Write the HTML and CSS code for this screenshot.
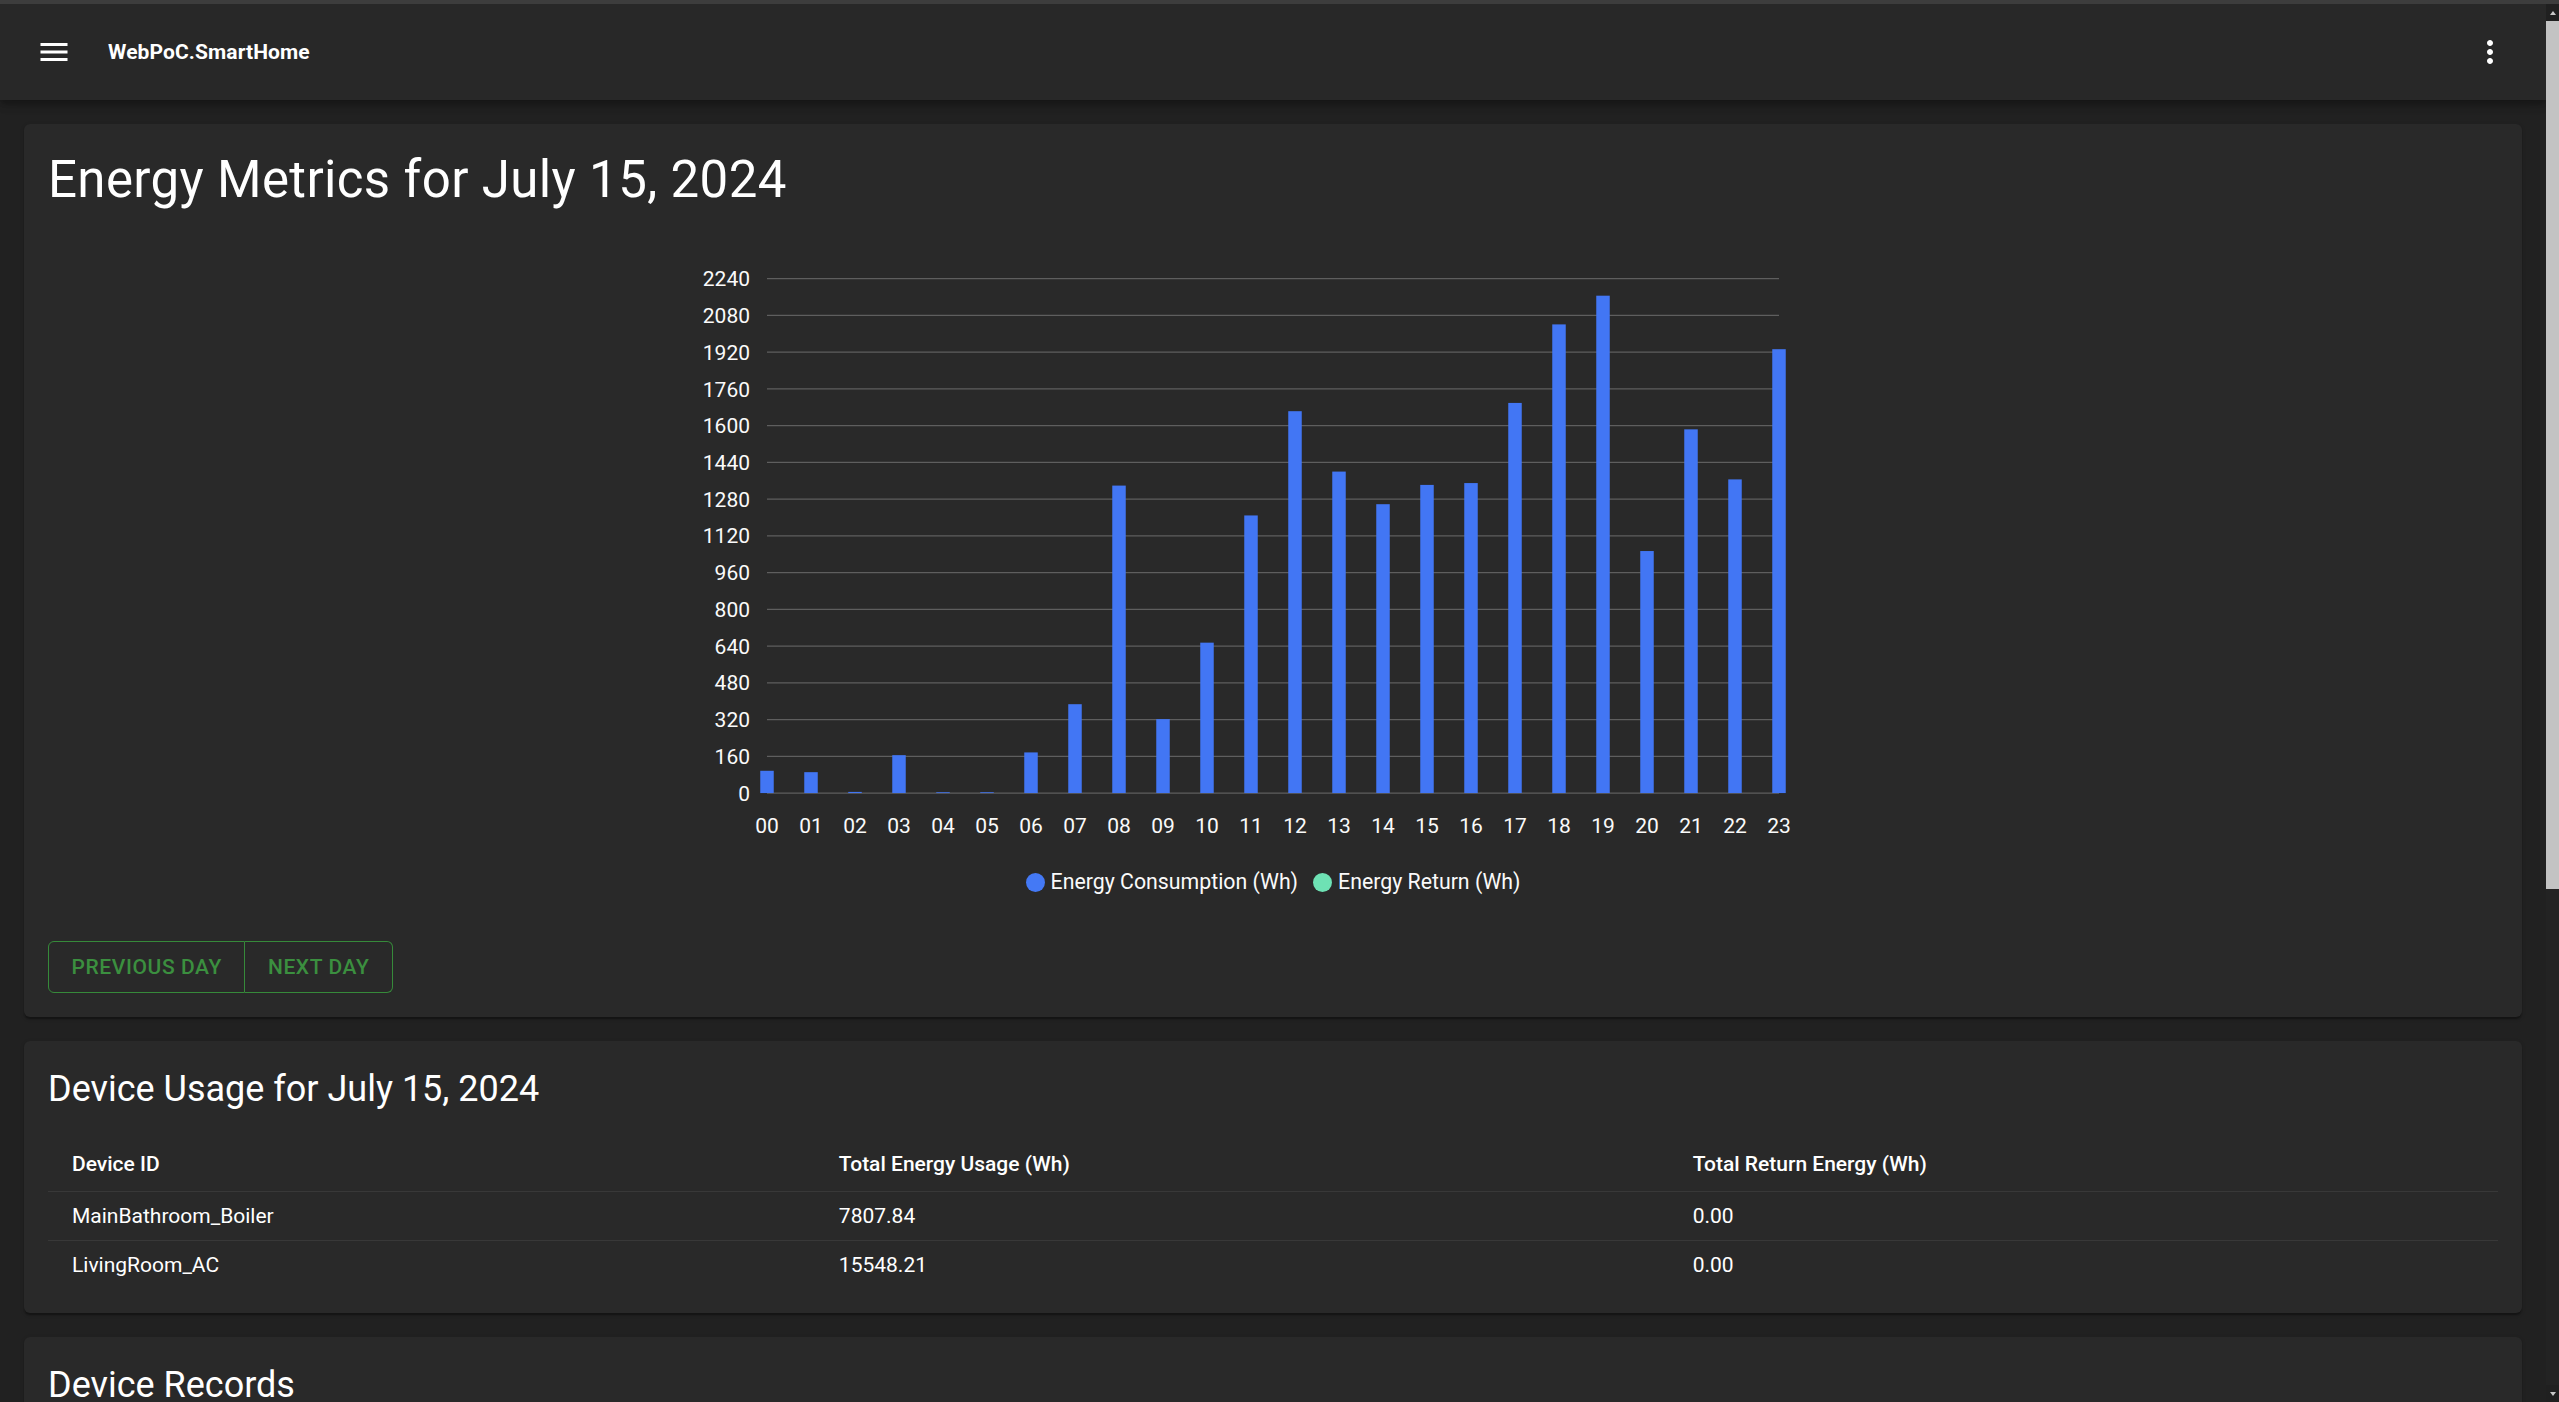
FILE: index.html
```html
<!DOCTYPE html>
<html lang="en">
<head>
<meta charset="utf-8">
<title>WebPoC.SmartHome</title>
<link rel="stylesheet" href="styles.css">
</head>
<body>
<div class="window">
  <div class="page">
    <header class="appbar">
      <div class="toolbar">
        <svg class="icon" viewBox="0 0 24 24" aria-hidden="true"><path d="M3 18h18v-2H3v2zm0-5h18v-2H3v2zm0-7v2h18V6H3z"/></svg>
        <div class="brand">WebPoC.SmartHome</div>
        <div class="spacer"></div>
        <svg class="icon" viewBox="0 0 24 24" aria-hidden="true"><path d="M12 8c1.1 0 2-.9 2-2s-.9-2-2-2-2 .9-2 2 .9 2 2 2zm0 2c-1.1 0-2 .9-2 2s.9 2 2 2 2-.9 2-2-.9-2-2-2zm0 6c-1.1 0-2 .9-2 2s.9 2 2 2 2-.9 2-2-.9-2-2-2z"/></svg>
      </div>
    </header>
    <main class="content">
      <section class="card">
        <h1 class="h4">Energy Metrics for July 15, 2024</h1>
        <div class="chart-wrap">
          <svg class="chart" id="chart" width="1200" height="655" viewBox="0 0 1200 655"></svg>
        </div>
        <div class="legend">
          <div class="legend-item"><span class="dot dot-blue"></span><span>Energy Consumption (Wh)</span></div>
          <div class="legend-item"><span class="dot dot-green"></span><span>Energy Return (Wh)</span></div>
        </div>
        <div class="btn-group">
          <button class="btn">Previous Day</button>
          <button class="btn">Next Day</button>
        </div>
      </section>
      <section class="card">
        <h2 class="h5">Device Usage for July 15, 2024</h2>
        <table class="table">
          <thead>
            <tr><th class="col1">Device ID</th><th class="col2">Total Energy Usage (Wh)</th><th>Total Return Energy (Wh)</th></tr>
          </thead>
          <tbody>
            <tr><td>MainBathroom_Boiler</td><td>7807.84</td><td>0.00</td></tr>
            <tr><td>LivingRoom_AC</td><td>15548.21</td><td>0.00</td></tr>
          </tbody>
        </table>
      </section>
      <section class="card card-records">
        <h2 class="h5">Device Records</h2>
      </section>
    </main>
  </div>
  <div class="scrollbar" aria-hidden="true">
    <div class="sb-btn"><span class="arrow-up"></span></div>
    <div class="sb-thumb"></div>
    <div class="sb-track"></div>
    <div class="sb-btn"><span class="arrow-down"></span></div>
  </div>
</div>
<script>
(function(){
  var svg = document.getElementById('chart');
  var NS = 'http://www.w3.org/2000/svg';
  var values = [97,91,5,165,3,3,177,387,1339,322,655,1209,1663,1400,1258,1342,1350,1699,2041,2166,1054,1584,1366,1933];
  var top = 66.7, step = 36.74, zero = top + 14*step, x0 = 94, dx = 44, scale = (14*step)/2240;
  function el(name, attrs, text){
    var e = document.createElementNS(NS, name);
    for (var k in attrs) e.setAttribute(k, attrs[k]);
    if (text !== undefined) e.textContent = text;
    svg.appendChild(e);
    return e;
  }
  for (var i = 0; i <= 14; i++) {
    var y = top + i*step;
    el('line', {x1: x0, x2: x0 + 23*dx, y1: y, y2: y, 'class': 'grid'});
    el('text', {x: 77, y: y + 7.6, 'class': 'ytick'}, String(2240 - 160*i));
  }
  for (var j = 0; j < 24; j++) {
    var cx = x0 + j*dx, h = Math.max(values[j]*scale, 0.8);
    el('rect', {x: cx - 6.75, y: zero - h, width: 13.5, height: h, 'class': 'bar'});
    el('text', {x: cx, y: 621.3, 'class': 'xtick'}, (j < 10 ? '0' : '') + j);
  }
})();
</script>
</body>
</html>
```
FILE: styles.css
```css
html {
  background: #212121;
}
body {
  margin: 0;
  height: 100vh;
  box-sizing: border-box;
  overflow: hidden;
  border-top: 4px solid #3d3d3d;
  background: #212121;
  color: #fff;
  font-family: Roboto, "Noto Sans", "Liberation Sans", sans-serif;
  display: flex;
  flex-direction: column;
}
.window {
  flex: 1;
  min-height: 0;
  display: flex;
}
.page {
  flex: 1;
  min-width: 0;
  overflow: hidden;
}

/* scrollbar rail drawn as in the screenshot */
.scrollbar {
  width: 13px;
  flex: none;
  display: flex;
  flex-direction: column;
  background: #232323;
}
.sb-btn {
  height: 17px;
  flex: none;
  display: flex;
  align-items: center;
  justify-content: center;
  background: #202020;
}
.sb-thumb {
  height: 868px;
  flex: none;
  background: #c3c3c3;
}
.sb-track {
  flex: 1;
}
.arrow-up {
  width: 0;
  height: 0;
  border-left: 3.5px solid transparent;
  border-right: 3.5px solid transparent;
  border-bottom: 4px solid #c8c8c8;
}
.arrow-down {
  width: 0;
  height: 0;
  border-left: 3.5px solid transparent;
  border-right: 3.5px solid transparent;
  border-top: 4px solid #c8c8c8;
}

.appbar {
  background: #282828;
  box-shadow: 0 3px 6px -1.5px rgba(0,0,0,.2), 0 6px 7.5px 0 rgba(0,0,0,.14), 0 1.5px 15px 0 rgba(0,0,0,.12);
  position: relative;
  z-index: 2;
}
.toolbar {
  height: 96px;
  display: flex;
  align-items: center;
  padding: 0 38px 0 36px;
}
.icon {
  width: 36px;
  height: 36px;
  fill: #fff;
  flex: none;
}
.brand {
  margin-left: 36px;
  font-size: 21px;
  font-weight: 700;
  letter-spacing: 0.1px;
}
.spacer {
  flex: 1;
}

.content {
  padding: 24px;
  display: flex;
  flex-direction: column;
  gap: 24px;
}
.card {
  background: #292929;
  border-radius: 6px;
  padding: 24px;
  box-shadow: 0 3px 1.5px -1.5px rgba(0,0,0,.2), 0 1.5px 1.5px 0 rgba(0,0,0,.14), 0 1.5px 4.5px 0 rgba(0,0,0,.12);
}
.card-records {
  min-height: 849px;
  box-sizing: border-box;
}
.h4 {
  margin: 0;
  font-size: 51px;
  font-weight: 400;
  line-height: 63px;
  letter-spacing: 0.37px;
}
.h5 {
  margin: 0;
  font-size: 36px;
  font-weight: 400;
  line-height: 48px;
}

.chart-wrap {
  display: flex;
  justify-content: center;
  padding-top: 1px;
}
.chart {
  display: block;
}
.chart .grid {
  stroke: #5e5e5e;
  stroke-width: 1.3;
}
.chart .bar {
  fill: #4276f4;
}
.chart text {
  font-family: Roboto, "Noto Sans", sans-serif;
  font-size: 21px;
  fill: #fafafa;
}
.chart .ytick {
  text-anchor: end;
}
.chart .xtick {
  text-anchor: middle;
}

.legend {
  display: flex;
  justify-content: center;
  gap: 15px;
  height: 30px;
  align-items: center;
  font-size: 21.3px;
  line-height: 30px;
  color: #fafafa;
}
.legend-item {
  display: flex;
  align-items: center;
  gap: 6px;
}
.dot {
  width: 19px;
  height: 19px;
  border-radius: 50%;
  display: block;
}
.dot-blue {
  background: #4479f5;
}
.dot-green {
  background: #6ee2b4;
}

.btn-group {
  display: flex;
  margin-top: 44px;
}
.btn {
  font-family: Roboto, "Noto Sans", sans-serif;
  font-size: 21px;
  font-weight: 500;
  letter-spacing: 0.6px;
  text-transform: uppercase;
  line-height: 36px;
  padding: 7px 22.5px;
  background: transparent;
  color: #3b8f3f;
  border: 1.5px solid #368a3a;
  cursor: pointer;
}
.btn:first-child {
  border-radius: 6px 0 0 6px;
}
.btn:last-child {
  border-left: 0;
  border-radius: 0 6px 6px 0;
}

.table {
  width: 100%;
  border-collapse: collapse;
  margin-top: 24px;
  font-size: 21px;
  line-height: 30px;
}
.table th, .table td {
  text-align: left;
  padding: 9px 24px;
  border-bottom: 1px solid #383838;
}
.table th {
  font-weight: 500;
  line-height: 36px;
}
.table td {
  font-weight: 400;
}
.table tbody tr:last-child td {
  border-bottom: 0;
}
.col1 {
  width: 31.3%;
}
.col2 {
  width: 34.85%;
}
```
